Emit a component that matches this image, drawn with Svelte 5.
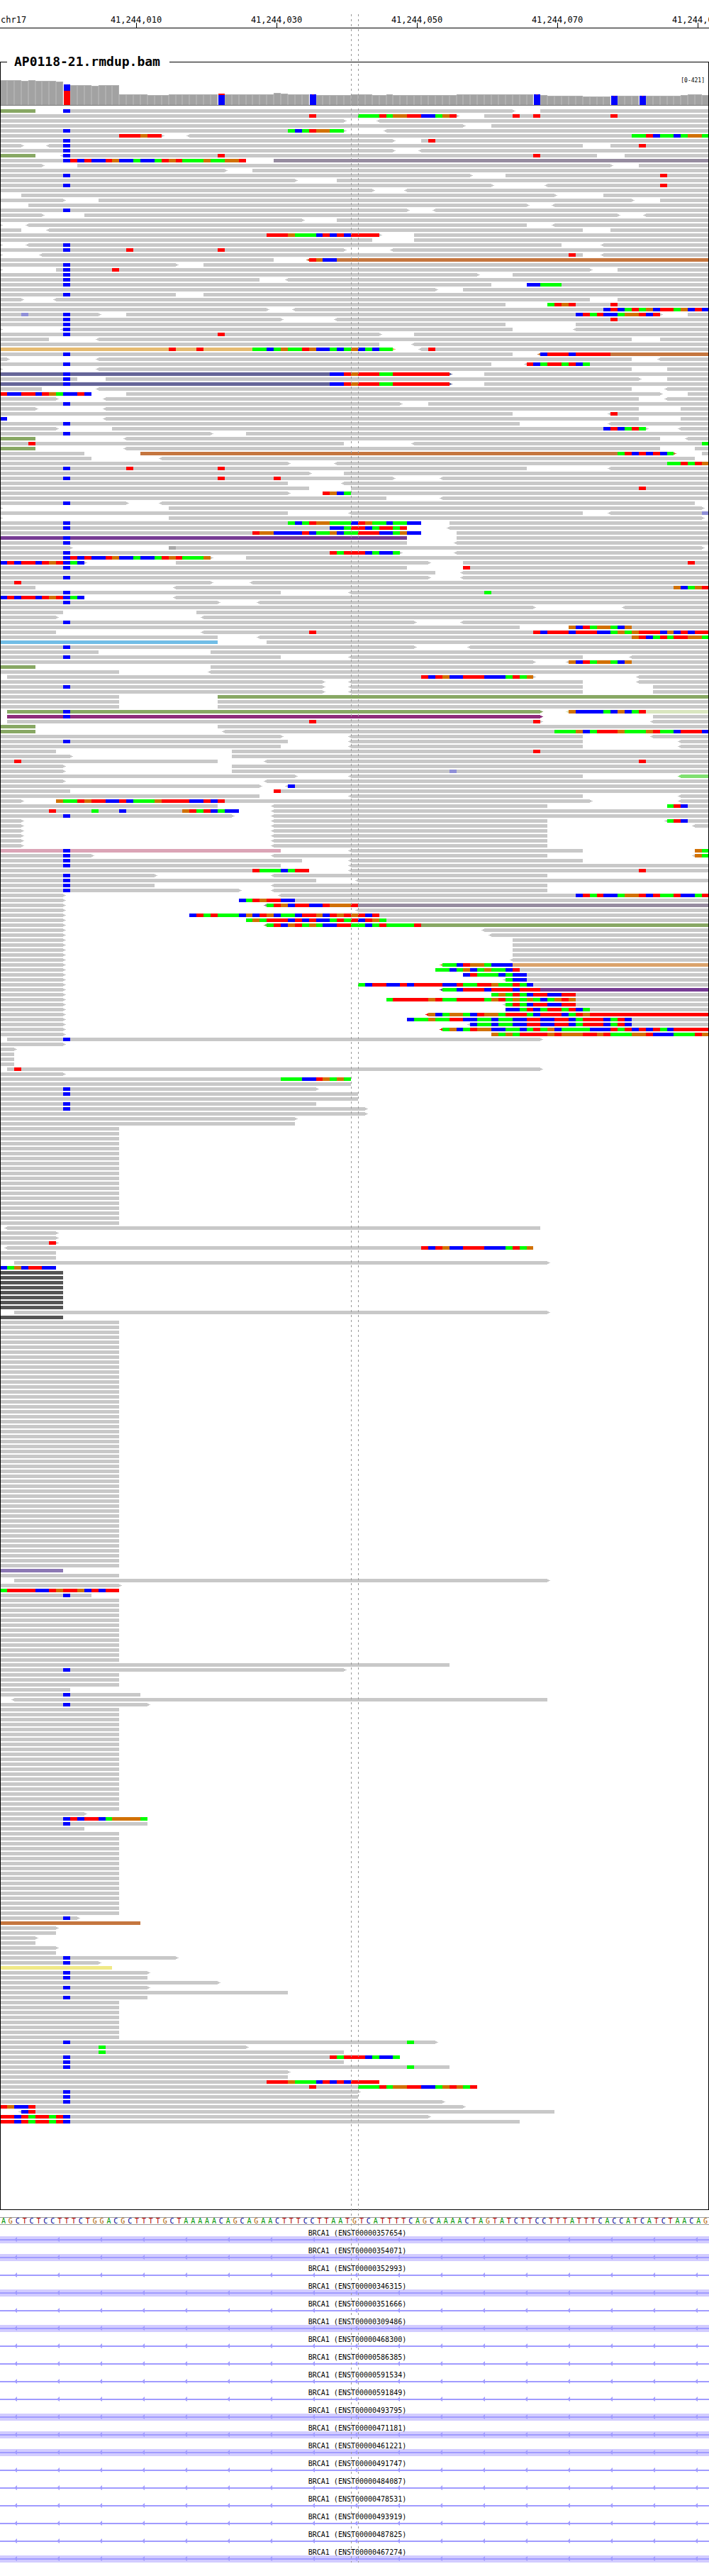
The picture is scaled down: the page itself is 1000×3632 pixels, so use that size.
<script>
  const BASE_COUNT = 101;
  const baseX = (k) => Math.round((k * 1000) / BASE_COUNT);

  const sequence =
    'AGCTCTCCTTTCTGGACGCTTTTGCTAAAAACAGCAGAACTTTCCTTAATGTCATTTTCAGCAAAACTAGTATCTTCCTTTATTTCACCATCATCTAACAG';

  const ticks = ['41,244,010', '41,244,030', '41,244,050', '41,244,070', '41,244,090'];

  // Coverage depth in pixels: [first base, last base, height]
  const coverage = [
    [0, 2, 35], [3, 3, 34], [4, 4, 35], [5, 7, 34], [8, 8, 33], [9, 9, 28], [10, 12, 28],
    [13, 13, 27], [14, 16, 28], [17, 20, 15], [21, 23, 14], [24, 38, 15], [39, 39, 17],
    [40, 40, 16], [41, 44, 15], [45, 49, 14], [50, 52, 15], [53, 54, 14], [55, 55, 15],
    [56, 64, 14], [65, 76, 15], [77, 77, 14], [78, 82, 13], [83, 86, 12], [87, 96, 13],
    [97, 97, 14], [98, 99, 15], [100, 100, 14],
  ];
  // Variant columns: [base, blue top, blue height, red top, red height, red width]
  const variants = [
    [9, 29, 9, 20, 20, 9], [31, 14, 14, 16, 2, 9], [44, 15, 15, 15, 1, 1],
    [76, 15, 15, 15, 1, 1], [87, 13, 13, 13, 1, 1], [91, 13, 13, 13, 1, 1],
  ];
  const COV_H = 36;
  const COV_BASE = 35;

  // One line per alignment row, positions in bases.
  //   [<]start-end[>][colour]  a read, with its strand arrow
  //   @posLETTERS              mismatched bases
  //   *n                       the row is repeated n times
  const pileup = `
0-5g 9-73> 77-101 @9C
0-65> 69-101 @44T @51AAATAGGTTCCAGT @73T @76T @87T
0-49> <54-101
0-66> 70-101
0-49> <55-101 @9C @41ACATGGAA
0-23> <27-101 @17TTTGTT @90AATCAACAGGA
0-56> 60-101 @9C @61T
0-3> <7-83 87-101 @9C @91T
0-56> <60-101 @9C
0-5g <9-85 89-101 @9C @31T @76T
0-9 39-101m @9CTCTCCTGCCACCATGTAAAGAAGGT
0-6> 11-87> 91-101
0-32> 36-101
0-67> 72-101 @9C @94T
0-42> 48-101
0-70> <78-101 @9C @94T
0-53> <58-101
3-79> 86-101
0-9> 14-90> 94-101
4-75> <79-101
0-58> <62-101 @9C
0-6> 12-88> <92-101
0-43> 48-101
0-0> <4-75 <79-101
0-3 <7-83 87-101
0-54> 59-101 @38TTTGAAACTCTCTTTT
0-53 59-101
0-0> <4-80 <86-101 @9C
0-49> <56-101 @9C @18T @31T
0-0> <6-83 <86-101 @81T
0-39 <44-101b @44TGCC
0-25> 29-101 @9C
0-0> 8-84> 88-101 @9C @16T
0-68> 73-101 @9C
0-37 <41-101 @9C
0-70 75-101 @9C @75CCAAA
0-62> 66-101
0-25 29-101 @9C
0-3> <8-84 88-101
0-72 78-101 @78ATGT @87T
0-38> <42-101 @86CTCATAGCTTAGCTC
0-14> 18-94> 98-101 @3V @9C @82CTATCCAGGTCT
0-40> <48-101 @9C @87T
0-72 82-101 @9C
0-0> <9-73 <82-101 @9C
0-54> 59-101 @9C @31T
0-7 <14-90 94-101
0-54 <59-101
0-56>t <60-101 @24T @28T @36AACAGAATGCCACAGCACAA @61T
0-73 <77-101b @9C @77CTTTCTTTTT
0-1> <14-90 <94-101
0-70 <75-101 @9C @75TCATTATCA
0-0> <14-90 95-101
0-64>s 69-101 @9C @47CCTGTTTAATTTTTTTT
0-11 15-91> 95-101 @9C
0-64>s 69-101 @9C @47CCTGTTTAATTTTTTTT
0-6 <14-90 <95-101
0-13 18-94> 98-101 @0TCCTTCTGACCTC
0-8> <15-91 <95-101
0-57> 61-101 @9C
0-5> <15-91 97-101
0-73 <87-101 @87T
0-1 <15-91 97-101 @0C
0-74 <87-101 @9C
0-8> 16-92> <97-101 @86CTCATA
0-30> 35-101 @9C
0-5g <18-94 <98-101
0-49 <59-101 @4T @100A
0-5g <18-94 99-101
0-12 20-96>b 100-101 @88ATCTCTCA
0-13 <23-99
0-41> <48-101 @95AATATG
0-75 <87-101 @9C @18T @31T
0-44> 49-101
0-56> <63-101 @9C @31T @39T
0-41 <49-101
0-44 50-101 @91T
0-41> 46-101 @46TGCA
0-55 <63-101
0-18> <23-99 @9C
0-0> 24-100>
0-41 <50-83 <87-101 @100V
0-0> 24-100>
0-60 64-101 @9C @41ACATGGAAACTGAACAACC
0-58 <64-101 @9C @47CCATTCATTAT
0-60 65-101 @36TGGCCCCTCAAGCAATTTCCAGCC
0-58p 65-101 @9C
0-58 <65-101 @9C
0-10> 24-100> @24D
0-57> <65-101 @9C @47TATTTCACCA
0-30> 35-101 @9CTCTCCTGCCACCATGTAAAG
0-12> 25-61> 66-101 @0CTCTTCTGTCAC @98T
0-58 66-101 @9C @66T
0-62 <66-101
0-61> <66-101 @9C
0-30> <36-101 @2T
0-5 <25-101 @96GCAGT
0-40 <50-101 @9C @69A
0-12 <25-101 @0CTCTTCTGTCAC
0-31> <37-101 @9C
0-76> <89-101
0-9 28-101
0-8> <29-101
0-59> <66-101 @9C
0-74 81-101 @81GCTAGGACG
0-8 <29-101 @44T @76TCTTTCTTTCCAGAGTTTCGCTCTT
0-31 <37-101 @90GTCATATTGGA
0-31l 38-101
0-59> <67-101 @9C
0-14 30-101
0-40 <50-83 <90-101 @9C
0-76> <81-101 @81GCTAGGACG
0-5g 30-101
0-17 <30-101
1-76> <91-101 @60TCTGCCTTTCCCATAG
0-46> <50-83 <91-101
0-46> <50-83 93-101 @9C
0-46> <50-83 93-101
0-17 31-101g
0-17 31-101 *2
1-77>g <81-101e @9C @81GCCCCACGCAT
1-77>f 93-101 @9C
1-77> <93-101 @44T @76T
0-5g 31-101
0-5g <32-101 @79AAAGCATTTGAAAGTAACTTTC
0-40> <50-83 <93-101
0-41 <50-83 <97-101 @9C
0-40 <50-83 <97-101
0-8 33-101 @76T
0-10> 33-101
0-31 <38-101 @2T @91T
0-9> 33-101
0-9> 33-101 @64V
0-42> <50-83 <97-101h
0-9> <38-101
0-37> <41-101 @41C
0-10 39-101 @39T
0-37 <50-83 <97-101
0-3> 8-84> <97-101 @8GAATGTTCCTCAAAGTTTTCCTCT
0-31 <39-78 95-101 @95ATC
0-34 <39-101 @7T @13A @17C @26GTATCACC
0-33> <39-101 @9C
0-3> <39-78 <95-101 @95ATC
0-3> <39-78 <99-101
0-3> <39-78 *4
0-40k <50-83 99-101 @9C @99GA
0-13> <39-78 <99-101 @9C @99GA
0-43 <50-83 @9C
0-40 <50-101 @9C
0-44 <50-101 @36TAAACATT @91T
0-22> <39-78 @9C
0-45 <51-101 @9C
0-22 <39-78 @9C
0-34> <39-78 @9C
0-9> <40-101 @82CTATCCAGGTCTAATCCAT
0-9> 34-101 @34CATGTTCC
0-9> <38-101m @38ATGCTTCCTGGGT
0-9> <51-101
0-9> 27-101 @27CTATAAACGCTGCAACTTGCTGTGTCT
0-9> 35-101 @35AGATTTCTCTCCATATCTGA
0-9> <38-101g @38ATCGTAGACCTTAACATAAAAT
0-9> <69-101
0-9> <70-101
0-9> 73-101 *4
0-9> <73-101
0-9> <63-101n @63AACTGGACCC
0-9> 62-101 @62AACAGCAGAACT
0-9> 66-101 @66CTAAACACC
0-9> <72-101 @72ACC
0-9> 51-101 @51ACTTCCTCTTTTCCTAATTGAATAC
0-9> <63-101p @63AACTTTCTTTCTTT
0-9> 70-101 @70AGATACTTCCTT
0-9> 55-101 @55ATTTTTGTAATTTTAGTAGAGACAGTG
0-9> <72-101 @72ATACTTCCTT
0-9> 72-101 @72CCATCATTATCA
0-9> <61-101r @61GCAGGACTGGATTTACTTTCATG
0-9> 58-101 @58CAAGAATTCCAACAACCTTCCTTCATTTCATC
0-9> <67-101 @67CAACAACCTTCCTTCATTTCATC
0-9> <63-101r @63AGCATGGCCAACATAGCAAAACCCTATCTCTAC
0-9> 70-101 @70GAGATTTTGTGGGTTGTAAAGGTCCCAAATG
1-77> @9C
0-9>
0-2>
0-2 *3
1-77> @2T
0-9>
0-50 @40AAACCTGAGA
0-50
0-45> @9C
0-51 @9C
0-51
0-45 @9C
0-52> @9C
0-52>
0-42>
0-42
0-17 *20
<1-77
0-8> *2
0-8> @7T
<1-76 @60TCTGCCTTTCCCATAG
0-8 *2
2-78>
0-8 @0CAGCTTCC
0-9d *8
2-78>
0-9d
0-17 *50
0-9u
0-17
2-78>
0-17>
0-17 @0ATTTTCCTGTTGCTCTT
0-13 @9C
0-17 *13
0-64
0-49> @9C
0-17 *3
0-10
0-20 @9C
<2-78
0-21> @9C
0-17 *21
0-12>
0-21 @9CTCTTCAGGGGA
0-21 @9C
0-12
0-17 *17
0-11> @9C
0-20b
0-8>
0-8
0-5>
0-5
0-8>
0-8
0-25> @9C
0-14> @9C
0-16y
0-21> @9C
0-21 @9C
0-31>
0-21> @9C
0-41
0-21 @9C
0-17 *8
0-62> @9C @58A
0-35> @14A
0-49 @14A
0-57 @9C @47TATTTCACCA
0-49 @9C
0-64 @9C @58A
0-41>
0-41
0-54 @38TTTGAAACTCTCTTTT
0-68 @44T @51AAATAGGTTCCAGTGAT
0-51> @9C
0-51 @9C
0-63> @9C
0-66> @0TGCCT
<3-79 @3CT
0-61> @0TTCTATTATC
0-74 @0TTCTATTATC`;

  const readColors = {
    '': '#c8c8c8', g: '#88a864', m: '#968ca0', b: '#c5763f', t: '#e6bb70', s: '#666699',
    p: '#763b94', l: '#71bde6', e: '#d9e6bf', f: '#8e2d7b', h: '#80e070', k: '#dba4b6',
    n: '#dba36b', r: '#ff0000', d: '#555555', u: '#8c78b4', y: '#f0e987',
  };
  const baseColors = {
    A: '#00ff00', C: '#0000ff', G: '#d17105', T: '#ff0000', V: '#9090d8', D: '#a8a8a8',
  };

  const ROW_PITCH = 7;
  const ROW_TOP = 5;
  const box = (x, y, w, h) => `M${x} ${y}h${w}v${h}h${-w}z`;

  function buildLayers() {
    const reads = {};
    const bases = {};
    const add = (layer, color, d) => (layer[color] = (layer[color] ?? '') + d);
    let row = 0;
    for (const line of pileup.trim().split('\n')) {
      const tokens = line.split(' ');
      const repeat = tokens.at(-1).startsWith('*') ? Number(tokens.pop().slice(1)) : 1;
      for (let n = 0; n < repeat; n++, row++) {
        const y = ROW_TOP + row * ROW_PITCH;
        for (const token of tokens) {
          if (token[0] === '@') {
            const [, pos, letters] = token.match(/@(\d+)(\w+)/);
            [...letters].forEach((letter, i) => {
              const x = baseX(Number(pos) + i);
              add(bases, baseColors[letter], box(x, y, baseX(Number(pos) + i + 1) - x, 5));
            });
            continue;
          }
          const [, left, from, to, right, key] = token.match(/(<?)(\d+)-(\d+)(>?)(\w?)/);
          const x0 = baseX(Number(from));
          const x1 = baseX(Number(to));
          const color = readColors[key];
          if (x1 > x0) add(reads, color, box(x0, y, x1 - x0, 5));
          if (left) add(reads, color, box(x0 - 2, y + 1, 2, 3) + box(x0 - 4, y + 2, 2, 1));
          if (right) add(reads, color, box(x1, y + 1, 2, 3) + box(x1 + 2, y + 2, 2, 1));
        }
      }
    }
    return { reads: Object.entries(reads), bases: Object.entries(bases) };
  }

  const layers = buildLayers();

  let outer = '';
  let inner = '';
  for (const [first, last, h] of coverage) {
    for (let k = first; k <= last; k++) {
      const x = baseX(k);
      const w = baseX(k + 1) - x;
      outer += box(x, COV_BASE - h, w, h);
      inner += box(x + 1, COV_BASE - h + 1, w - 2, h - 1);
    }
  }

  const genes = [
    ['ENST00000357654', true], ['ENST00000354071', true], ['ENST00000352993', false],
    ['ENST00000346315', true], ['ENST00000351666', false], ['ENST00000309486', true],
    ['ENST00000468300', false], ['ENST00000586385', false], ['ENST00000591534', false],
    ['ENST00000591849', false], ['ENST00000493795', true], ['ENST00000471181', true],
    ['ENST00000461221', true], ['ENST00000491747', false], ['ENST00000484087', false],
    ['ENST00000478531', false], ['ENST00000493919', false], ['ENST00000487825', false],
    ['ENST00000467274', true],
  ];
</script>

<main class="browser">
  <header class="ruler">
    <span class="chrom">chr17</span>
    {#each ticks as tick}
      <span class="tick">{tick}</span>
    {/each}
  </header>

  <fieldset class="sample">
    <legend>AP0118-21.rmdup.bam</legend>
    <div class="coverage">
      <span class="range">[0-421]</span>
      <svg viewBox="1 0 998 {COV_H}" preserveAspectRatio="none" shape-rendering="crispEdges" aria-label="Coverage">
        <path d={outer} fill="#b0b0b0" />
        <path d={inner} fill="#a2a2a2" />
        {#each variants as [base, blueTop, blueH, redTop, redH, redW]}
          {@const x = baseX(base) + 1}
          <rect x={x - 1} y="0" width="1" height={COV_BASE} fill="#fff" />
          <rect {x} y={COV_BASE - blueTop} width="9" height={blueH} fill="#00f" />
          <rect x={redW === 1 ? x + 4 : x} y={COV_BASE - redTop} width={redW} height={redH} fill="#f00" />
        {/each}
        <rect x="0" y={COV_BASE} width="1000" height="1" fill="#777" />
      </svg>
    </div>
    <svg class="reads" viewBox="1 0 998 2966" preserveAspectRatio="none" shape-rendering="crispEdges" aria-label="Aligned reads">
      {#each layers.reads as [color, d]}
        <path {d} fill={color} />
      {/each}
      {#each layers.bases as [color, d]}
        <path {d} fill={color} />
      {/each}
    </svg>
  </fieldset>

  <div class="sequence">
    {#each sequence as letter}
      <span class="base-{letter}">{letter}</span>
    {/each}
  </div>

  <ul class="genes">
    {#each genes as [id, exon]}
      <li>
        <span class="gene-name">BRCA1 ({id})</span>
        <svg class="track" class:exon aria-hidden="true">
          <defs>
            <pattern id="strand-{id}" width="60" height="10" patternUnits="userSpaceOnUse">
              <path d="M20 5L24 1V8Z" fill="#a09bff" />
            </pattern>
          </defs>
          <rect width="100%" height="10" fill="url(#strand-{id})" />
          <rect y="4" width="100%" height="2" fill="#a09bff" />
        </svg>
      </li>
    {/each}
  </ul>

  <div class="guide start"></div>
  <div class="guide end"></div>
</main>

<style>
  :global(body) {
    margin: 0;
    background: #fff;
  }

  .browser {
    position: relative;
    overflow: hidden;
    color: #000;
    font-family: 'DejaVu Sans Mono', monospace;
  }

  .ruler {
    display: flex;
    box-sizing: border-box;
    height: 40px;
    padding-top: 20px;
    border-bottom: 1px solid #000;
    font-size: 12px;
    line-height: 16px;
  }

  .chrom {
    box-sizing: border-box;
    flex: 0 0 9.3%;
    padding-left: 1px;
  }

  .tick {
    display: flex;
    flex: 0 0 19.8%;
    flex-direction: column;
    align-items: center;
    height: 19px;
  }

  .tick::after {
    content: '';
    flex: 0 0 7px;
    width: 1px;
    margin-top: -4px;
    background: #000;
  }

  .sample {
    min-width: 0;
    margin: 36px 0 0;
    padding: 0;
    border: 1px solid #000;
  }

  legend {
    margin-left: 9px;
    padding: 0 13px 0 10px;
    font-size: 18px;
    font-weight: bold;
    line-height: 22px;
  }

  .coverage {
    position: relative;
    padding-top: 15px;
  }

  .coverage svg {
    display: block;
    width: 100%;
    height: 36px;
  }

  .range {
    position: absolute;
    top: 11px;
    right: 5px;
    font-size: 8px;
    line-height: 10px;
  }

  .reads {
    display: block;
    width: 100%;
    height: 2966px;
  }

  .sequence {
    display: grid;
    grid-template-columns: repeat(101, minmax(0, 1fr));
    margin-top: 10px;
    border: solid #999;
    border-width: 1px 0;
    font-size: 10px;
    line-height: 9px;
    text-align: center;
  }

  .base-A {
    color: #009600;
  }

  .base-C {
    color: #000096;
  }

  .base-G {
    color: #b06000;
  }

  .base-T {
    color: #b00000;
  }

  .genes {
    margin: 1px 0 0;
    padding: 0;
    list-style: none;
  }

  .gene-name {
    display: block;
    padding: 6px 0 0 8px;
    font-size: 10px;
    line-height: 9px;
    text-align: center;
  }

  .track {
    display: block;
    width: 100%;
    height: 10px;
  }

  .track.exon {
    background: #d2ccff;
  }

  .guide {
    position: absolute;
    top: 20px;
    bottom: 0;
    width: 1px;
    background: repeating-linear-gradient(#999 0 3px, transparent 3px 7px);
  }

  .start {
    left: 49.5%;
  }

  .end {
    left: 50.5%;
  }
</style>
